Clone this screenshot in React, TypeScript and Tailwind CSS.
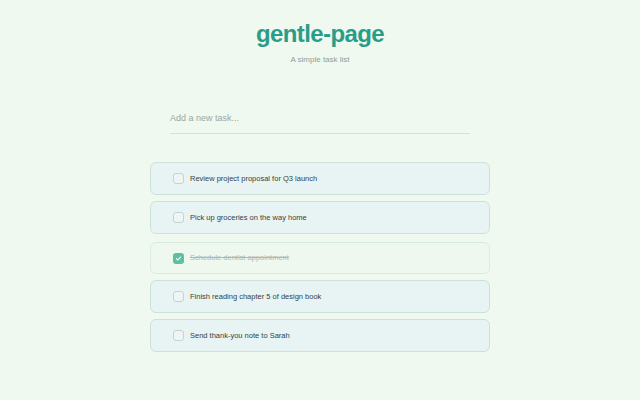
const tasks = [
  { id: 1, text: 'Review project proposal for Q3 launch', done: false },
  { id: 2, text: 'Pick up groceries on the way home', done: false },
  { id: 3, text: 'Schedule dentist appointment', done: true },
  { id: 4, text: 'Finish reading chapter 5 of design book', done: false },
  { id: 5, text: 'Send thank-you note to Sarah', done: false },
];

function CheckBox({ checked }: { checked: boolean }) {
  if (checked) {
    return (
      <span className="w-[11px] h-[11px] rounded-[3px] bg-[#5fbea4] flex items-center justify-center shrink-0">
        <svg width="7" height="7" viewBox="0 0 12 12" fill="none">
          <path d="M2.5 6.2l2.4 2.4 4.6-5" stroke="#fff" strokeWidth="1.8" strokeLinecap="round" strokeLinejoin="round" />
        </svg>
      </span>
    );
  }
  return <span className="w-[11px] h-[11px] rounded-[3px] border border-[#c3d3cf] bg-[#eef6f5] shrink-0" />;
}

export default function App() {
  return (
    <div
      className="w-[640px] h-[400px] bg-[#f0f9ef] flex flex-col items-center overflow-hidden"
      style={{ fontFamily: '"Liberation Sans", Arial, sans-serif' }}
    >
      <h1 className="mt-[18px] text-[24px] leading-[32px] font-bold tracking-tight text-[#2a9d8a]">gentle-page</h1>
      <p className="mt-[4px] text-[8px] leading-[12px] text-[#8e9c9a]">A simple task list</p>

      <div className="mt-[38px] w-[300px] border-b border-[#d4e2d8] pb-[5px]">
        <input
          className="w-full bg-transparent outline-none text-[9px] leading-[12px] text-[#2f3e3b] placeholder:text-[#98a6a3]"
          placeholder="Add a new task..."
        />
      </div>

      <ul className="mt-[28px] w-[340px] flex flex-col gap-[6px]">
        {tasks.map((t) => (
          <li
            key={t.id}
            className={
              t.done
                ? 'mt-[2px] h-[32px] rounded-[6px] border border-[#d9ecdc] bg-[#eef8ef] flex items-center gap-[6px] pl-[22px]'
                : 'h-[33px] rounded-[6px] border border-[#cde0dc] bg-[#e8f4f3] flex items-center gap-[6px] pl-[22px]'
            }
          >
            <CheckBox checked={t.done} />
            <span
              className={
                t.done
                  ? 'text-[7.5px] text-[#a9bab5] line-through'
                  : 'text-[7.5px] text-[#34423f]'
              }
            >
              {t.text}
            </span>
          </li>
        ))}
      </ul>
    </div>
  );
}
